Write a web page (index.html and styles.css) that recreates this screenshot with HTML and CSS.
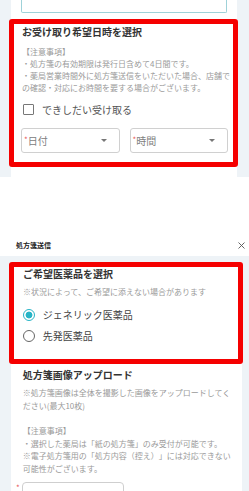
FILE: index.html
```html
<!DOCTYPE html>
<html lang="ja">
<head>
<meta charset="utf-8">
<link rel="stylesheet" href="styles.css">
</head>
<body>
<section class="page page-1">
  <div class="card card-1">
    <div class="input-stub"></div>
    <div class="hl hl-1">
      <h2 class="title">お受け取り希望日時を選択</h2>
      <div class="notes notes-1">【注意事項】<br>・処方箋の有効期限は発行日含めて4日間です。<br>・薬局営業時間外に処方箋送信をいただいた場合、店舗での確認・対応にお時間を要する場合がございます。</div>
      <label class="check"><span class="box"></span><span class="check-label">できしだい受け取る</span></label>
      <div class="selects">
        <div class="select"><span class="req">*</span><span class="ph">日付</span><span class="caret"></span></div>
        <div class="select"><span class="req">*</span><span class="ph">時間</span><span class="caret"></span></div>
      </div>
    </div>
  </div>
</section>
<header class="sheet-head">
  <span class="sheet-title">処方箋送信</span>
  <svg class="close" width="7" height="7" viewBox="0 0 7 7"><path d="M0.5 0.5L6.5 6.5M6.5 0.5L0.5 6.5" stroke="#555" stroke-width="0.9" fill="none"/></svg>
</header>
<section class="page page-2">
  <div class="card card-2">
    <div class="hl hl-2">
      <h2 class="title title-2">ご希望医薬品を選択</h2>
      <div class="notes note-2">※状況によって、ご希望に添えない場合があります</div>
      <div class="radios">
        <label class="radio"><span class="dot on"></span><span class="radio-label">ジェネリック医薬品</span></label>
        <label class="radio"><span class="dot"></span><span class="radio-label">先発医薬品</span></label>
      </div>
    </div>
    <h2 class="title title-upload">処方箋画像アップロード</h2>
    <div class="notes notes-upload">※処方箋画像は全体を撮影した画像をアップロードしてください(最大10枚)<br><br>【注意事項】<br>・選択した薬局は「紙の処方箋」のみ受付が可能です。<br>※電子処方箋用の「処方内容（控え）」には対応できない可能性がございます。</div>
    <div class="file-row"><span class="req req-file">*</span><div class="file-box"></div></div>
  </div>
</section>
</body>
</html>
```
FILE: styles.css
```css
html, body {
  margin: 0;
  padding: 0;
  background: #fff;
}
body {
  width: 249px;
  height: 491px;
  overflow: hidden;
  font-family: "Noto Sans CJK JP", "Noto Sans", sans-serif;
  color: #333;
  text-spacing-trim: space-all;
}
.page {
  background: #eef3f7;
}
.card {
  background: #fff;
}
.card-1 {
  margin: 0 12px 0 11px;
  padding-bottom: 10px;
}
.input-stub {
  height: 13px;
  margin: 0 10px;
  box-sizing: border-box;
  border: 1px solid #9fd2d9;
  border-top: 0;
  border-radius: 0 0 2px 2px;
}
.hl {
  border: 5px solid #f50000;
  border-radius: 3px;
}
.hl-1 {
  margin: 6px -1px 0 -2px;
  padding: 0 5px 8.4px 8px;
}
.title {
  margin: 0;
  font-size: 10px;
  font-weight: 700;
  color: #333;
  white-space: nowrap;
}
.hl-1 .title {
  margin-top: 1px;
  line-height: 14px;
}
.notes {
  font-size: 8px;
  color: #9a9a9a;
}
.notes-1 {
  margin-top: 6.5px;
  margin-right: -4px;
  line-height: 12.3px;
}
.check {
  display: flex;
  align-items: center;
  height: 14px;
  margin-top: 8.3px;
  padding-left: 1px;
}
.box {
  width: 11px;
  height: 11px;
  box-sizing: border-box;
  border: 1.2px solid #777;
  border-radius: 1px;
}
.check-label {
  margin-left: 8px;
  font-size: 10px;
  color: #555;
  line-height: 14px;
}
.selects {
  display: grid;
  grid-template-columns: 1fr 1fr;
  column-gap: 10px;
  margin-top: 11.3px;
  margin-left: -1px;
}
.select {
  height: 25px;
  box-sizing: border-box;
  border: 1px solid #d0d0d0;
  border-radius: 3px;
  display: flex;
  align-items: center;
  padding-left: 2px;
  padding-right: 12px;
}
.req {
  color: #e8595a;
  font-size: 8px;
  line-height: 10px;
  align-self: flex-start;
  margin-top: 6px;
}
.ph {
  font-size: 10px;
  color: #808080;
  line-height: 14px;
}
.caret {
  margin-left: auto;
  width: 0;
  height: 0;
  border-left: 3px solid transparent;
  border-right: 3px solid transparent;
  border-top: 3px solid #777;
}
.sheet-head {
  height: 79px;
  box-sizing: border-box;
  display: flex;
  align-items: flex-end;
  justify-content: space-between;
  padding: 0 4px 5.5px 16px;
}
.sheet-title {
  font-size: 7px;
  font-weight: 700;
  line-height: 10px;
  color: #222;
}
.close {
  display: block;
  margin-bottom: 1.5px;
}
.page-2 {
  padding-top: 6px;
}
.card-2 {
  margin: 0 7px 0 11px;
  padding: 0 8px 0 11.7px;
}
.hl-2 {
  margin: 0 -9px 0 -13.7px;
  padding: 0 9px 15px 9px;
}
.title-2 {
  line-height: 13px;
}
.note-2 {
  margin-top: 6px;
  line-height: 12px;
  white-space: nowrap;
}
.radios {
  display: flex;
  flex-direction: column;
  gap: 4.3px;
  margin-top: 9.7px;
}
.radio {
  display: flex;
  align-items: center;
  height: 16px;
}
.dot {
  width: 12px;
  height: 12px;
  box-sizing: border-box;
  border: 1.3px solid #666;
  border-radius: 50%;
}
.dot.on {
  border: 1.5px solid #27b4c6;
  background: radial-gradient(circle, #27b4c6 0 3.2px, #fff 3.7px);
}
.radio-label {
  margin-left: 7.7px;
  font-size: 10px;
  color: #444;
  line-height: 14px;
}
.title-upload {
  margin-top: 4.7px;
  line-height: 14px;
}
.notes-upload {
  margin-top: 5px;
  line-height: 12.6px;
}
.file-row {
  display: flex;
  align-items: flex-start;
  margin-top: 6px;
  margin-left: -6.7px;
}
.req-file {
  margin-top: 1px;
  width: 5px;
}
.file-box {
  margin-left: 1.3px;
  width: 102px;
  height: 30px;
  box-sizing: border-box;
  border: 1px solid #cfcfcf;
  border-radius: 4px;
}
```
